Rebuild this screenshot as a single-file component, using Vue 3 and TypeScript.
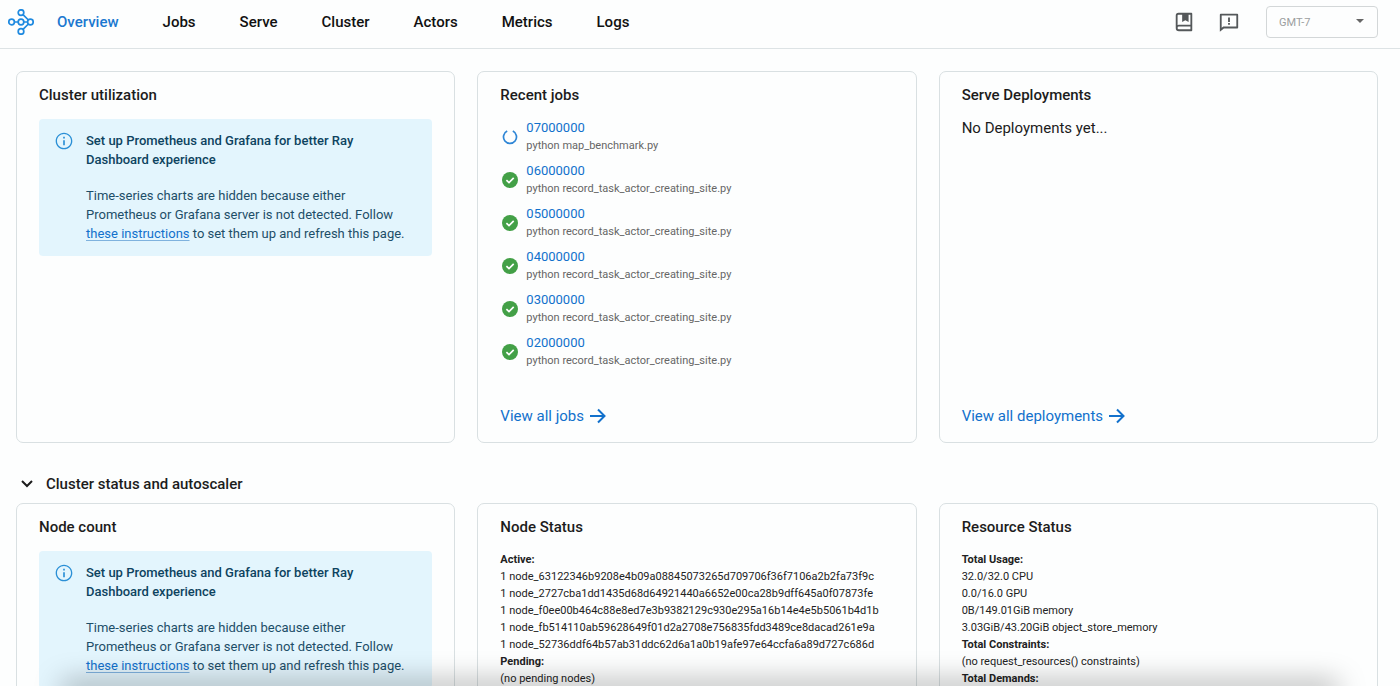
<script setup lang="ts">
import { ref } from 'vue'

interface Job {
  id: string
  entrypoint: string
  running: boolean
}

interface StatusLine {
  text: string
  strong?: boolean
}

const tabs = ['Overview', 'Jobs', 'Serve', 'Cluster', 'Actors', 'Metrics', 'Logs']
const timezone = ref('GMT-7')
const expanded = ref(true)

const script = 'python record_task_actor_creating_site.py'
const jobs: Job[] = [
  { id: '07000000', entrypoint: 'python map_benchmark.py', running: true },
  { id: '06000000', entrypoint: script, running: false },
  { id: '05000000', entrypoint: script, running: false },
  { id: '04000000', entrypoint: script, running: false },
  { id: '03000000', entrypoint: script, running: false },
  { id: '02000000', entrypoint: script, running: false },
]

const nodeStatus: StatusLine[] = [
  { text: 'Active:', strong: true },
  { text: '1 node_63122346b9208e4b09a08845073265d709706f36f7106a2b2fa73f9c' },
  { text: '1 node_2727cba1dd1435d68d64921440a6652e00ca28b9dff645a0f07873fe' },
  { text: '1 node_f0ee00b464c88e8ed7e3b9382129c930e295a16b14e4e5b5061b4d1b' },
  { text: '1 node_fb514110ab59628649f01d2a2708e756835fdd3489ce8dacad261e9a' },
  { text: '1 node_52736ddf64b57ab31ddc62d6a1a0b19afe97e64ccfa6a89d727c686d' },
  { text: 'Pending:', strong: true },
  { text: '(no pending nodes)' },
]

const resourceStatus: StatusLine[] = [
  { text: 'Total Usage:', strong: true },
  { text: '32.0/32.0 CPU' },
  { text: '0.0/16.0 GPU' },
  { text: '0B/149.01GiB memory' },
  { text: '3.03GiB/43.20GiB object_store_memory' },
  { text: 'Total Constraints:', strong: true },
  { text: '(no request_resources() constraints)' },
  { text: 'Total Demands:', strong: true },
]
</script>

<template>
  <div class="app">
    <header class="topbar">
      <a class="logo" href="#" aria-label="Ray">
        <svg viewBox="0 0 26 26" width="26" height="26" fill="none" stroke="currentColor" stroke-width="1.7">
          <circle cx="3.6" cy="13" r="2.8" />
          <circle cx="13" cy="13" r="2.8" />
          <circle cx="22.4" cy="13" r="2.8" />
          <circle cx="13" cy="3.6" r="2.8" />
          <circle cx="13" cy="22.4" r="2.8" />
          <path d="M6.4 13h3.8M15.8 13h3.8M15 5.6l5.4 5.4M15 20.4l5.4-5.4" />
        </svg>
      </a>
      <nav class="tabs">
        <a v-for="(tab, i) in tabs" :key="tab" href="#" class="tab" :class="{ active: i === 0 }">{{ tab }}</a>
      </nav>
      <div class="tools">
        <a class="tool" href="#" aria-label="Documentation">
          <svg viewBox="0 0 24 24" width="22" height="22" fill="currentColor">
            <path d="M20 22H6.5A3.5 3.5 0 0 1 3 18.5V5a3 3 0 0 1 3-3h14a1 1 0 0 1 1 1v18a1 1 0 0 1-1 1zm-1-2v-3H6.5a1.5 1.5 0 0 0 0 3H19zM10 4H6a1 1 0 0 0-1 1v10.337A3.486 3.486 0 0 1 6.5 15H19V4h-2v8l-3.5-2-3.5 2V4z" />
          </svg>
        </a>
        <a class="tool" href="#" aria-label="Feedback">
          <svg viewBox="0 0 24 24" width="22" height="22" fill="currentColor">
            <path d="M6.455 19L2 22.5V4a1 1 0 0 1 1-1h18a1 1 0 0 1 1 1v14a1 1 0 0 1-1 1H6.455zm-.692-2H20V5H4v13.385L5.763 17zM11 13h2v2h-2v-2zm0-6h2v5h-2V7z" />
          </svg>
        </a>
        <div class="timezone">
          <select v-model="timezone" aria-label="Timezone">
            <option>GMT-7</option>
            <option>UTC</option>
          </select>
          <svg class="caret" viewBox="0 0 8 4" width="8" height="4" fill="currentColor"><path d="M0 0h8L4 4z" /></svg>
        </div>
      </div>
    </header>

    <main class="content">
      <div class="cards">
        <section class="card">
          <h2>Cluster utilization</h2>
          <div class="alert">
            <svg class="info" viewBox="0 0 24 24" width="20" height="20" fill="currentColor">
              <path d="M11 7h2v2h-2zm0 4h2v6h-2zm1-9C6.48 2 2 6.48 2 12s4.48 10 10 10 10-4.48 10-10S17.52 2 12 2zm0 18.4c-4.63 0-8.4-3.77-8.4-8.4S7.37 3.6 12 3.6s8.4 3.77 8.4 8.4-3.77 8.4-8.4 8.4z" />
            </svg>
            <div>
              <h3>Set up Prometheus and Grafana for better Ray Dashboard experience</h3>
              <p>Time-series charts are hidden because either Prometheus or Grafana server is not detected. Follow <a href="#">these instructions</a> to set them up and refresh this page.</p>
            </div>
          </div>
        </section>

        <section class="card">
          <h2>Recent jobs</h2>
          <ul class="jobs">
            <li v-for="job in jobs" :key="job.id">
              <svg v-if="job.running" class="running" viewBox="0 0 18 18" width="18" height="18" fill="none" stroke="currentColor" stroke-width="1.7">
                <path d="M6.2 3.1a6.5 6.5 0 1 0 5.6 0" />
              </svg>
              <svg v-else class="done" viewBox="0 0 18 18" width="18" height="18">
                <circle cx="9" cy="9" r="8" fill="currentColor" />
                <path d="M5.4 9.1l2.6 2.5 4.7-4.7" fill="none" stroke="#fff" stroke-width="1.7" />
              </svg>
              <div>
                <a href="#">{{ job.id }}</a>
                <span>{{ job.entrypoint }}</span>
              </div>
            </li>
          </ul>
          <a class="more" href="#">
            View all jobs
            <svg viewBox="0 0 16 16" width="16" height="16" fill="none" stroke="currentColor" stroke-width="2"><path d="M0 8h14M8 1.5l6.500 6.500L8 14.500" /></svg>
          </a>
        </section>

        <section class="card">
          <h2>Serve Deployments</h2>
          <p class="empty">No Deployments yet...</p>
          <a class="more" href="#">
            View all deployments
            <svg viewBox="0 0 16 16" width="16" height="16" fill="none" stroke="currentColor" stroke-width="2"><path d="M0 8h14M8 1.5l6.500 6.500L8 14.500" /></svg>
          </a>
        </section>
      </div>

      <button class="section-toggle" type="button" :aria-expanded="expanded" @click="expanded = !expanded">
        <svg viewBox="0 0 12 8" width="12" height="8" fill="none" stroke="currentColor" stroke-width="2"><path d="M1 1l5 5 5-5" /></svg>
        Cluster status and autoscaler
      </button>

      <div v-if="expanded" class="cards">
        <section class="card">
          <h2>Node count</h2>
          <div class="alert">
            <svg class="info" viewBox="0 0 24 24" width="20" height="20" fill="currentColor">
              <path d="M11 7h2v2h-2zm0 4h2v6h-2zm1-9C6.48 2 2 6.48 2 12s4.48 10 10 10 10-4.48 10-10S17.52 2 12 2zm0 18.4c-4.63 0-8.4-3.77-8.4-8.4S7.37 3.6 12 3.6s8.4 3.77 8.4 8.4-3.77 8.4-8.4 8.4z" />
            </svg>
            <div>
              <h3>Set up Prometheus and Grafana for better Ray Dashboard experience</h3>
              <p>Time-series charts are hidden because either Prometheus or Grafana server is not detected. Follow <a href="#">these instructions</a> to set them up and refresh this page.</p>
            </div>
          </div>
        </section>

        <section class="card">
          <h2>Node Status</h2>
          <div class="status">
            <div v-for="line in nodeStatus" :key="line.text" :class="{ strong: line.strong }">{{ line.text }}</div>
          </div>
        </section>

        <section class="card">
          <h2>Resource Status</h2>
          <div class="status">
            <div v-for="line in resourceStatus" :key="line.text" :class="{ strong: line.strong }">{{ line.text }}</div>
          </div>
        </section>
      </div>
    </main>
    <div class="edge-shadow"></div>
  </div>
</template>

<style>
body {
  margin: 0;
  background: #fdfefe;
}
</style>

<style scoped>
.app {
  position: relative;
  box-sizing: border-box;
  height: 100vh;
  overflow: hidden;
  display: flex;
  flex-direction: column;
  font-family: Roboto, "Liberation Sans", sans-serif;
  color: #1c1c1c;
}
a {
  color: #1271cc;
  text-decoration: none;
}
h2,
h3,
p,
ul {
  margin: 0;
  padding: 0;
}
.topbar {
  display: flex;
  flex: none;
  align-items: center;
  height: 48px;
  padding: 0 22px 0 8px;
  border-bottom: 1px solid #dde3e5;
}
.topbar > * {
  margin-bottom: 4px;
}
.logo {
  display: flex;
  color: #1f8ae0;
}
.tabs {
  display: flex;
  gap: 44px;
  margin-left: 23px;
}
.tab {
  font-size: 15px;
  font-weight: 500;
  line-height: 20px;
  color: #111;
}
.tab.active {
  color: #1b78d0;
}
.tools {
  display: flex;
  align-items: center;
  margin-left: auto;
}
.tool {
  display: flex;
  margin-right: 23px;
  color: #54585a;
}
.timezone {
  position: relative;
  margin-left: 3px;
}
.timezone select {
  appearance: none;
  box-sizing: border-box;
  width: 112px;
  height: 32px;
  padding: 0 12px;
  border: 1px solid #d3d7d8;
  border-radius: 4px;
  background: transparent;
  font-family: inherit;
  font-size: 11px;
  color: #9c9fa0;
}
.caret {
  position: absolute;
  right: 14px;
  top: 13px;
  color: #666;
  pointer-events: none;
}
.content {
  flex: 1;
  min-height: 0;
  padding: 22px 22px 0 16px;
}
.cards {
  display: grid;
  grid-template-columns: repeat(3, minmax(0, 1fr));
  gap: 22px;
}
.card {
  box-sizing: border-box;
  display: flex;
  flex-direction: column;
  min-height: 372px;
  padding: 11px 22px 14px;
  border: 1px solid #d9e0e2;
  border-radius: 7px;
}
.card h2 {
  margin-bottom: 12px;
  font-size: 15px;
  font-weight: 500;
  line-height: 24px;
}
.alert {
  display: flex;
  gap: 12px;
  padding: 12px 15px 13px;
  border-radius: 4px;
  background: #e3f5fd;
  color: #1d4e68;
  font-size: 13px;
  line-height: 19px;
}
.alert h3 {
  margin-bottom: 17px;
  font-size: 13px;
  font-weight: 500;
  color: #0d4360;
}
.alert a {
  text-decoration: underline;
  text-underline-offset: 2px;
  text-decoration-color: #7fb2de;
}
.info {
  flex: none;
  color: #2a8fd6;
}
.jobs {
  display: flex;
  flex-direction: column;
  gap: 8px;
  list-style: none;
}
.jobs li {
  display: flex;
  align-items: center;
  gap: 7px;
  padding-left: 1px;
}
.jobs a {
  display: block;
  font-size: 13px;
  line-height: 18px;
}
.jobs span {
  display: block;
  font-size: 11px;
  line-height: 17px;
  color: #666;
}
.running {
  color: #2f86d6;
}
.done {
  color: #43a047;
}
.empty {
  font-size: 15px;
  line-height: 18px;
}
.more {
  display: flex;
  align-items: center;
  align-self: flex-start;
  gap: 6px;
  margin-top: auto;
  font-size: 15px;
  line-height: 24px;
}
.section-toggle {
  display: flex;
  align-items: center;
  gap: 13px;
  margin-top: 29px;
  margin-bottom: 7px;
  padding: 0 5px;
  border: 0;
  background: none;
  font-family: inherit;
  font-size: 15px;
  font-weight: 500;
  line-height: 24px;
  color: #1c1c1c;
}
.status {
  font-size: 11px;
  line-height: 17px;
  color: #222;
}
.strong {
  font-weight: 700;
}
.edge-shadow {
  position: absolute;
  right: 70px;
  bottom: 0;
  left: 70px;
  height: 0;
  box-shadow: 0 4px 28px 8px rgba(0, 0, 0, 0.35);
  pointer-events: none;
}
</style>
